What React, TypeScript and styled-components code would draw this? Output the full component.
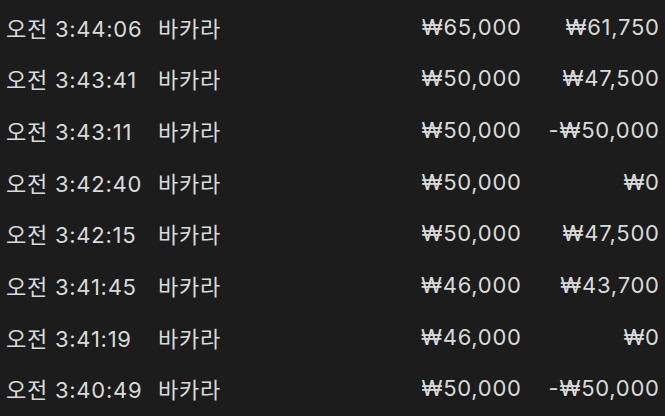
import React from 'react';
import styled, { createGlobalStyle } from 'styled-components';

const GlobalStyle = createGlobalStyle`
	html, body {
		margin: 0;
		padding: 0;
		background: #1c1c1c;
	}
	body {
		font-family: Inter, 'Noto Sans CJK KR', sans-serif;
		-webkit-font-smoothing: antialiased;
	}
`;

type Bet = {
	time: string;
	game: string;
	amount: string;
	payout: string;
};

const bets: Bet[] = [
	{ time: '오전 3:44:06', game: '바카라', amount: '₩65,000', payout: '₩61,750' },
	{ time: '오전 3:43:41', game: '바카라', amount: '₩50,000', payout: '₩47,500' },
	{ time: '오전 3:43:11', game: '바카라', amount: '₩50,000', payout: '-₩50,000' },
	{ time: '오전 3:42:40', game: '바카라', amount: '₩50,000', payout: '₩0' },
	{ time: '오전 3:42:15', game: '바카라', amount: '₩50,000', payout: '₩47,500' },
	{ time: '오전 3:41:45', game: '바카라', amount: '₩46,000', payout: '₩43,700' },
	{ time: '오전 3:41:19', game: '바카라', amount: '₩46,000', payout: '₩0' },
	{ time: '오전 3:40:49', game: '바카라', amount: '₩50,000', payout: '-₩50,000' },
];

const Page = styled.div`
	width: 665px;
	height: 416px;
	overflow: hidden;
	background: #1c1c1c;
	padding-top: 1px;
	box-sizing: border-box;
`;

const Row = styled.div`
	display: grid;
	grid-template-columns: 152px 1fr auto 138px;
	align-items: center;
	height: 51.65px;
	padding: 0 6px;
	color: #dadada;
	font-size: 22px;
	letter-spacing: 0.75px;
`;

// right-aligned cells drop the trailing tracking so they end flush
const Cell = styled.span<{ $align?: 'left' | 'right' }>`
	white-space: nowrap;
	text-align: ${({ $align }) => $align || 'left'};
	margin-right: ${({ $align }) => ($align === 'right' ? '-0.75px' : '0')};
`;

export default function App() {
	return (
		<>
			<GlobalStyle />
			<Page>
				{bets.map((b, i) => (
					<Row key={i}>
						<Cell>{b.time}</Cell>
						<Cell>{b.game}</Cell>
						<Cell $align="right">{b.amount}</Cell>
						<Cell $align="right">{b.payout}</Cell>
					</Row>
				))}
			</Page>
		</>
	);
}
